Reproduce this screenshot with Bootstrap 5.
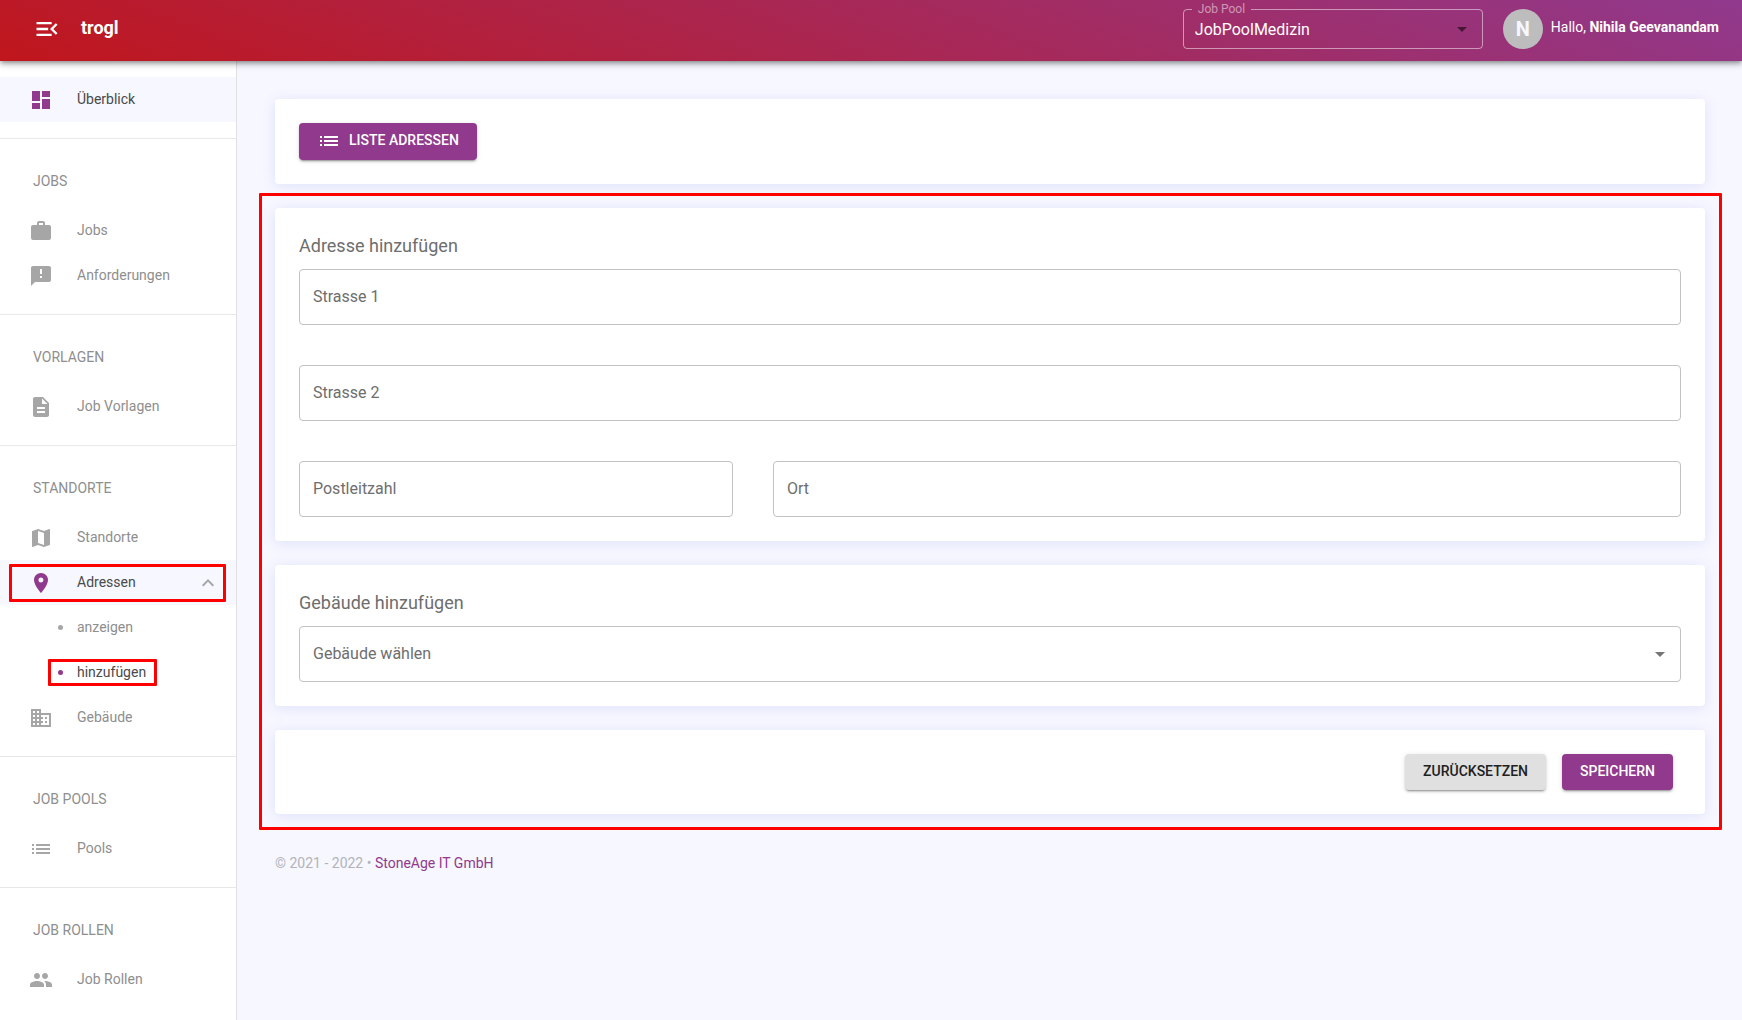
<!DOCTYPE html>
<html lang="de">
<head>
<meta charset="utf-8">
<meta name="viewport" content="width=device-width, initial-scale=1">
<title>trogl – Adresse hinzufügen</title>
<link href="https://cdn.jsdelivr.net/npm/bootstrap@5.3.0/dist/css/bootstrap.min.css" rel="stylesheet">
<style>
  :root { --brand: #90398d; --page: #f6f7ff; --mute: #8e8e8e; --edge: #c2c2c2; --mark: #ff0000; }
  body { font-family: Roboto, "Liberation Sans", sans-serif; font-size: 14px; line-height: 20px; background: var(--page); color: #6e6e6e; }
  svg { display: block; fill: currentColor; flex: none; }

  .topbar { height: 61px; padding: 0 23px 12px 33px; background: linear-gradient(20deg, #c0161c, #90398d); box-shadow: 0 2px 4px -1px rgba(0,0,0,.3), 0 4px 5px rgba(0,0,0,.16), 0 1px 10px rgba(0,0,0,.12); position: relative; z-index: 5; color: #fff; }
  .topbar-item { height: 40px; }
  .brand-name { font-size: 18px; font-weight: 700; color: #fff; line-height: 24px; padding-bottom: 2px; }
  .pool-box { width: 300px; height: 46px; margin-right: 20px; border: 1px solid rgba(255,255,255,.5); border-radius: 4px; }
  .pool-box legend { float: none; width: auto; margin: 0 0 0 8px; padding: 0 6px; font-size: 12px; line-height: 12px; color: rgba(255,255,255,.5); }
  .pool-box legend label { display: block; }
  .pool-wrap { position: relative; }
  .pool-wrap select { width: 100%; height: 30px; padding: 0 32px 0 11px; appearance: none; border: 0; background: transparent; color: #fff; font-size: 16px; line-height: 24px; }
  .pool-wrap option { color: #333; }
  .select-caret { position: absolute; pointer-events: none; }
  .pool-wrap .select-caret { right: 8px; top: 2px; color: rgba(0,0,0,.54); }
  .avatar { width: 40px; border-radius: 50%; background: #bdbdbd; color: var(--page); font-size: 20px; font-weight: 700; }

  .sidebar { width: 237px; flex: none; background: #fff; border-right: 1px solid #e0e0e0; }
  .side-group { padding: 16px 0; border-bottom: 1px solid #e8e8e8; }
  .side-group:last-child { border-bottom: 0; }
  .side-title { height: 53px; padding-left: 33px; display: flex; align-items: center; font-size: 14px; font-weight: 400; margin: 0; color: var(--mute); text-transform: uppercase; }
  .side-link { position: relative; height: 45px; display: flex; align-items: center; padding: 0 16px 0 29px; color: var(--mute); text-decoration: none; }
  .side-link > svg, .side-link > .bullet { color: #a6a6a6; }
  .side-link .side-text { margin-left: 24px; padding-bottom: 1px; }
  .side-link.active { color: #4a4a4a; }
  .side-link.active > svg:first-child, .side-link.active > .bullet { color: var(--brand); }
  .side-link.tinted { background: var(--page); }
  .bullet { width: 5px; height: 5px; border-radius: 50%; background: currentColor; margin-left: 29px; }
  .side-link .bullet + .side-text { margin-left: 14px; }
  .marker { position: absolute; border: 3px solid var(--mark); border-radius: 1px; pointer-events: none; z-index: 2; }
  .marker-row { inset: 4px 10px 3px 9px; }
  .marker-sub { inset: 9px 79px 9px 48px; }
  .marker-form { inset: -15px -17px -16px -16px; }

  .content { padding: 38px 37px 24px 38px; }
  .panel { background: #fff; border-radius: 4px; padding: 24px; box-shadow: 0 2px 14px rgba(98,98,210,.14); }
  .stack { gap: 24px; }
  .panel-title { height: 37px; margin: 0; padding-top: 2px; font-size: 18px; font-weight: 400; line-height: 24px; color: #6e6e6e; }
  .field-grid { --bs-gutter-x: 40px; --bs-gutter-y: 40px; }

  .form-floating > .field { height: 56px; border: 1px solid var(--edge); border-radius: 4px; background: #fff; padding: 16px 14px; font-size: 16px; line-height: 24px; }
  .form-floating > label { padding: 16px 14px; font-size: 16px; line-height: 24px; color: #6e6e6e; border: 0; height: auto; }
  .pick { position: relative; }
  .pick select { width: 100%; height: 56px; appearance: none; border: 1px solid var(--edge); border-radius: 4px; background: #fff; padding: 0 32px 0 13px; font-size: 16px; line-height: 24px; color: #6e6e6e; }
  .pick .select-caret { right: 9px; top: 16px; color: #757575; }

  .btn-raised { min-height: 36px; padding: 6px 18px 7px; border: 0; border-radius: 4px; font-size: 14px; font-weight: 500; line-height: 23px; text-transform: uppercase; box-shadow: 0 3px 1px -2px rgba(0,0,0,.2), 0 2px 2px rgba(0,0,0,.14), 0 1px 5px rgba(0,0,0,.12); }
  .btn-brand, .btn-brand:hover { background: var(--brand); color: #fff; }
  .btn-grey, .btn-grey:hover { background: #e0e0e0; color: #212121; }
  .footer-line { margin-top: 39px; color: #b2b3ba; }
  .footer-line a { color: var(--brand); text-decoration: none; }
</style>
</head>
<body>
<div class="d-flex flex-column min-vh-100">
  <header class="topbar d-flex align-items-end">
    <a href="#" class="topbar-item d-flex align-items-center text-white" aria-label="Menü einklappen">
      <svg width="28" height="28" viewBox="0 0 24 24"><path d="M3 18h13v-2H3v2zm0-5h10v-2H3v2zm0-7v2h13V6H3zm18 9.590L17.420 12 21 8.410 19.590 7l-5 5 5 5L21 15.590z"/></svg>
    </a>
    <div class="topbar-item d-flex align-items-center ms-3 ps-1"><span class="brand-name">trogl</span></div>
    <fieldset class="pool-box ms-auto">
      <legend><label for="pool">Job Pool</label></legend>
      <div class="pool-wrap">
        <select id="pool"><option>JobPoolMedizin</option></select>
        <svg class="select-caret" width="24" height="24" viewBox="0 0 24 24"><path d="M7 10l5 5 5-5z"/></svg>
      </div>
    </fieldset>
    <div class="topbar-item avatar d-flex align-items-center justify-content-center me-2">N</div>
    <div class="topbar-item d-flex align-items-center"><span class="pb-1">Hallo, <strong>Nihila Geevanandam</strong></span></div>
  </header>

  <div class="d-flex flex-grow-1">
    <nav class="sidebar">
      <div class="side-group">
        <a href="#" class="side-link active tinted"><svg width="24" height="24" viewBox="0 0 24 24"><path d="M3 13h8V3H3v10zm0 8h8v-6H3v6zm10 0h8V11h-8v10zm0-18v6h8V3h-8z"/></svg><span class="side-text">Überblick</span></a>
      </div>
      <div class="side-group">
        <h6 class="side-title">Jobs</h6>
        <a href="#" class="side-link"><svg width="24" height="24" viewBox="0 0 24 24"><path d="M10 2h4a2 2 0 0 1 2 2v2h4a2 2 0 0 1 2 2v11a2 2 0 0 1-2 2H4a2 2 0 0 1-2-2V8c0-1.110.89-2 2-2h4V4c0-1.110.89-2 2-2m4 4V4h-4v2h4z"/></svg><span class="side-text">Jobs</span></a>
        <a href="#" class="side-link"><svg width="24" height="24" viewBox="0 0 24 24"><path d="M20 2H4c-1.100 0-1.990.9-1.990 2L2 22l4-4h14c1.100 0 2-.9 2-2V4c0-1.100-.9-2-2-2zm-7 12h-2v-2h2v2zm0-4h-2V5h2v5z"/></svg><span class="side-text">Anforderungen</span></a>
      </div>
      <div class="side-group">
        <h6 class="side-title">Vorlagen</h6>
        <a href="#" class="side-link"><svg width="24" height="24" viewBox="0 0 24 24"><path d="M14 2H6c-1.100 0-1.990.9-1.990 2L4 20c0 1.100.89 2 1.990 2H18c1.100 0 2-.9 2-2V8l-6-6zm2 16H8v-2h8v2zm0-4H8v-2h8v2zm-3-5V3.500L18.500 9H13z"/></svg><span class="side-text">Job Vorlagen</span></a>
      </div>
      <div class="side-group">
        <h6 class="side-title">Standorte</h6>
        <a href="#" class="side-link"><svg width="24" height="24" viewBox="0 0 24 24"><path d="M20.500 3l-.16.030L15 5.100 9 3 3.360 4.900c-.21.070-.36.250-.36.480V20.500c0 .28.220.5.5.5l.16-.03L9 18.900l6 2.100 5.640-1.900c.21-.07.36-.25.36-.48V3.500c0-.28-.22-.5-.5-.5zM15 19l-6-2.110V5l6 2.110V19z"/></svg><span class="side-text">Standorte</span></a>
        <a href="#" class="side-link active tinted"><svg width="24" height="24" viewBox="0 0 24 24"><path d="M12 2C8.130 2 5 5.130 5 9c0 5.250 7 13 7 13s7-7.750 7-13c0-3.870-3.130-7-7-7zm0 9.500a2.500 2.500 0 1 1 0-5 2.500 2.500 0 0 1 0 5z"/></svg><span class="side-text">Adressen</span><svg class="ms-auto" width="24" height="24" viewBox="0 0 24 24"><path d="M12 8l-6 6 1.410 1.410L12 10.830l4.590 4.580L18 14z"/></svg><span class="marker marker-row"></span></a>
        <a href="#" class="side-link"><span class="bullet"></span><span class="side-text">anzeigen</span></a>
        <a href="#" class="side-link active"><span class="bullet"></span><span class="side-text">hinzufügen</span><span class="marker marker-sub"></span></a>
        <a href="#" class="side-link"><svg width="24" height="24" viewBox="0 0 24 24"><path d="M12 7V3H2v18h20V7H12zM6 19H4v-2h2v2zm0-4H4v-2h2v2zm0-4H4V9h2v2zm0-4H4V5h2v2zm4 12H8v-2h2v2zm0-4H8v-2h2v2zm0-4H8V9h2v2zm0-4H8V5h2v2zm10 12h-8v-2h2v-2h-2v-2h2v-2h-2V9h8v10zm-2-8h-2v2h2v-2zm0 4h-2v2h2v-2z"/></svg><span class="side-text">Gebäude</span></a>
      </div>
      <div class="side-group">
        <h6 class="side-title">Job Pools</h6>
        <a href="#" class="side-link"><svg width="24" height="24" viewBox="0 0 24 24"><path d="M3 13h2v-2H3v2zm0 4h2v-2H3v2zm0-8h2V7H3v2zm4 4h14v-2H7v2zm0 4h14v-2H7v2zM7 7v2h14V7H7z"/></svg><span class="side-text">Pools</span></a>
      </div>
      <div class="side-group">
        <h6 class="side-title">Job Rollen</h6>
        <a href="#" class="side-link"><svg width="24" height="24" viewBox="0 0 24 24"><path d="M16 11c1.660 0 2.990-1.340 2.990-3S17.660 5 16 5s-3 1.340-3 3 1.340 3 3 3zm-8 0c1.660 0 2.990-1.340 2.990-3S9.660 5 8 5 5 6.340 5 8s1.340 3 3 3zm0 2c-2.330 0-7 1.170-7 3.500V19h14v-2.500c0-2.330-4.670-3.500-7-3.500zm8 0c-.29 0-.62.020-.97.050 1.160.84 1.970 1.970 1.970 3.450V19h6v-2.500c0-2.330-4.670-3.500-7-3.500z"/></svg><span class="side-text">Job Rollen</span></a>
      </div>
    </nav>

    <main class="content flex-grow-1">
      <div class="panel mb-4">
        <button type="button" class="btn btn-raised btn-brand d-inline-flex align-items-start">
          <svg class="me-2" width="24" height="24" viewBox="0 0 24 24"><path d="M3 13h2v-2H3v2zm0 4h2v-2H3v2zm0-8h2V7H3v2zm4 4h14v-2H7v2zm0 4h14v-2H7v2zM7 7v2h14V7H7z"/></svg>Liste Adressen
        </button>
      </div>
      <form class="position-relative d-flex flex-column stack">
        <section class="panel">
          <h2 class="panel-title">Adresse hinzufügen</h2>
          <div class="row gy-0 field-grid">
            <div class="col-12"><div class="form-floating"><input type="text" class="form-control field" id="street1" placeholder="Strasse 1"><label for="street1">Strasse 1</label></div></div>
            <div class="col-12"><div class="form-floating"><input type="text" class="form-control field" id="street2" placeholder="Strasse 2"><label for="street2">Strasse 2</label></div></div>
            <div class="col-4"><div class="form-floating"><input type="text" class="form-control field" id="zip" placeholder="Postleitzahl"><label for="zip">Postleitzahl</label></div></div>
            <div class="col-8"><div class="form-floating"><input type="text" class="form-control field" id="city" placeholder="Ort"><label for="city">Ort</label></div></div>
          </div>
        </section>
        <section class="panel">
          <h2 class="panel-title"><label for="building">Gebäude hinzufügen</label></h2>
          <div class="pick">
            <select id="building"><option>Gebäude wählen</option></select>
            <svg class="select-caret" width="24" height="24" viewBox="0 0 24 24"><path d="M7 10l5 5 5-5z"/></svg>
          </div>
        </section>
        <section class="panel d-flex justify-content-end gap-3">
          <button type="reset" class="btn btn-raised btn-grey">Zurücksetzen</button>
          <button type="submit" class="btn btn-raised btn-brand me-2">Speichern</button>
        </section>
        <span class="marker marker-form"></span>
      </form>
      <footer class="footer-line">© 2021 - 2022 • <a href="#">StoneAge IT GmbH</a></footer>
    </main>
  </div>
</div>
<script src="https://cdn.jsdelivr.net/npm/bootstrap@5.3.0/dist/js/bootstrap.bundle.min.js"></script>
</body>
</html>
